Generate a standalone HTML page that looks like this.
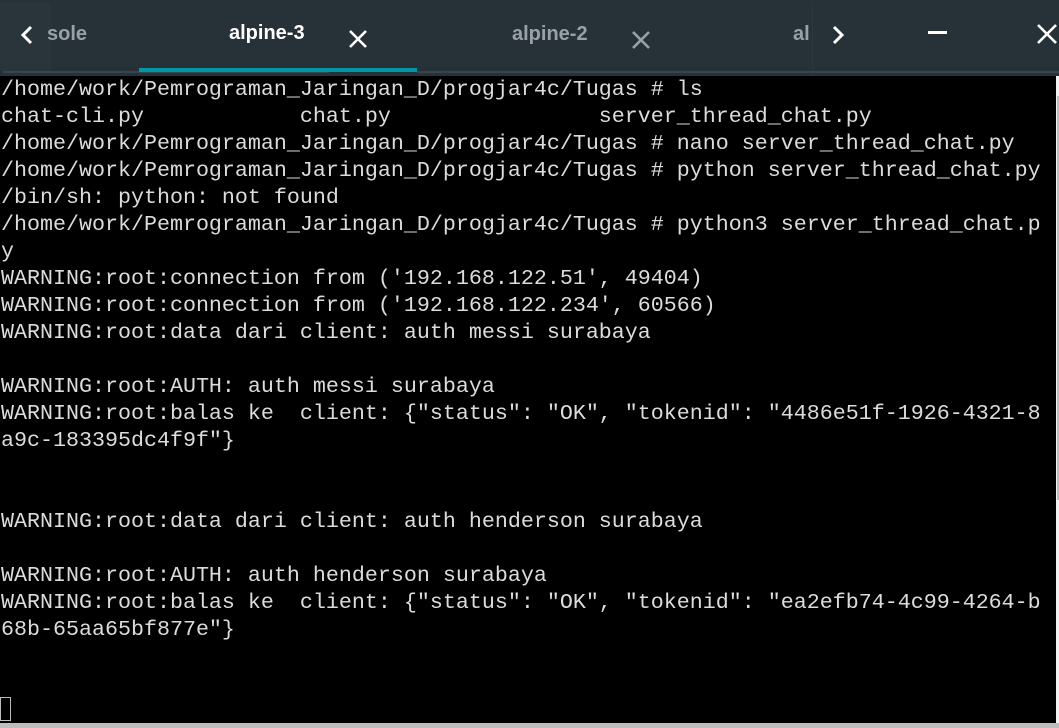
<!DOCTYPE html>
<html><head><meta charset="utf-8"><style>
html,body{margin:0;padding:0;width:1059px;height:728px;overflow:hidden;background:#000;}
#hdr{position:absolute;left:0;top:0;width:1059px;height:76px;background:#263238;}
#lft{position:absolute;left:0;top:3px;width:51px;height:68px;background:#29343b;}
#rgt{position:absolute;left:812px;top:3px;width:247px;height:73px;background:#263238;border-left:1px solid #2c383f;}
#line{position:absolute;left:3px;top:71px;width:326px;height:2px;background:#37454d;}
#line2{position:absolute;left:417px;top:71px;width:911px;height:2px;background:#37454d;}
#ul{position:absolute;left:139px;top:68px;width:278px;height:4px;background:#0097a7;}
.t{position:absolute;font-family:"Liberation Sans",sans-serif;font-weight:bold;font-size:20px;top:23px;white-space:nowrap;}
#term{position:absolute;left:0;top:76px;width:1056px;height:647px;background:#000;}
pre{margin:0;position:absolute;left:1px;top:76px;font-family:"Liberation Mono",monospace;font-size:21.67px;line-height:27px;color:#dcdcdc;}
#sb{position:absolute;left:1056px;top:76px;width:3px;height:647px;background:#f2f2f2;}
#th{position:absolute;left:1057px;top:96px;width:2px;height:404px;background:#bdbdbd;}
#bot{position:absolute;left:0;top:723px;width:1059px;height:5px;background:#bdbdbd;}
#cur{position:absolute;left:0;top:697px;width:11px;height:24px;border:1px solid #bbb;box-sizing:border-box;}
svg{position:absolute;}
</style></head><body>
<div id="hdr"></div>
<div id="lft"></div>
<div id="rgt"></div>
<div id="line"></div><div id="line2"></div>
<div id="ul"></div>
<div class="t" style="left:47px;color:#9aa1a6;">sole</div>
<div class="t" style="left:229px;color:#fff;top:22px">alpine-3</div>
<div class="t" style="left:512px;color:#9aa1a6;">alpine-2</div>
<div class="t" style="left:793px;color:#9aa1a6;width:17px;overflow:hidden">alpine-1</div>
<svg style="left:18px;top:24px" width="18" height="22"><path d="M13 3 L5 11 L13 19" stroke="#fff" stroke-width="3" fill="none"/></svg>
<svg style="left:348px;top:29px" width="20" height="20"><path d="M2 2 L18 18 M18 2 L2 18" stroke="#fff" stroke-width="2.6"/></svg>
<svg style="left:631px;top:30px" width="20" height="20"><path d="M2 2 L18 18 M18 2 L2 18" stroke="#9aa1a6" stroke-width="2.6"/></svg>
<svg style="left:829px;top:24px" width="18" height="22"><path d="M5 3 L13 11 L5 19" stroke="#fff" stroke-width="3" fill="none"/></svg>
<svg style="left:928px;top:31px" width="22" height="4"><rect x="0" y="0" width="19" height="3" fill="#fff"/></svg>
<svg style="left:1036px;top:23px" width="22" height="22"><path d="M2 2 L20 20 M20 2 L2 20" stroke="#fff" stroke-width="2.6"/></svg>
<div id="term"></div>
<pre>/home/work/Pemrograman_Jaringan_D/progjar4c/Tugas # ls
chat-cli.py            chat.py                server_thread_chat.py
/home/work/Pemrograman_Jaringan_D/progjar4c/Tugas # nano server_thread_chat.py
/home/work/Pemrograman_Jaringan_D/progjar4c/Tugas # python server_thread_chat.py
/bin/sh: python: not found
/home/work/Pemrograman_Jaringan_D/progjar4c/Tugas # python3 server_thread_chat.p
y
WARNING:root:connection from ('192.168.122.51', 49404)
WARNING:root:connection from ('192.168.122.234', 60566)
WARNING:root:data dari client: auth messi surabaya

WARNING:root:AUTH: auth messi surabaya
WARNING:root:balas ke  client: {"status": "OK", "tokenid": "4486e51f-1926-4321-8
a9c-183395dc4f9f"}


WARNING:root:data dari client: auth henderson surabaya

WARNING:root:AUTH: auth henderson surabaya
WARNING:root:balas ke  client: {"status": "OK", "tokenid": "ea2efb74-4c99-4264-b
68b-65aa65bf877e"}
</pre>
<div id="cur"></div>
<div id="sb"></div><div id="th"></div>
<div id="bot"></div>
</body></html>
